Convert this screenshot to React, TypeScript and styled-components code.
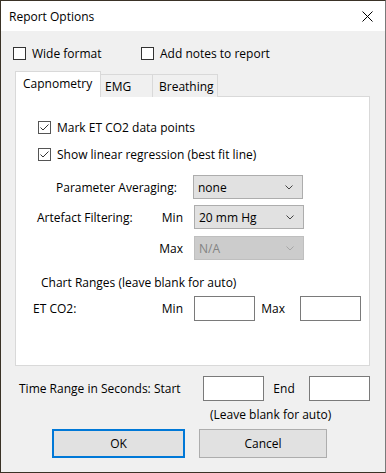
import React from 'react'
import styled, { createGlobalStyle } from 'styled-components'

const GlobalStyle = createGlobalStyle`
  html, body {
    margin: 0;
    padding: 0;
    background: #3a3226;
  }
  * {
    box-sizing: border-box;
  }
`

const Window = styled.div`
  width: 386px;
  height: 473px;
  display: flex;
  flex-direction: column;
  background: #f0f0f0;
  border: 1px solid #3a3226;
  border-right-color: #7a7a7a;
  font-family: 'Open Sans', 'Noto Sans', sans-serif;
  font-size: 12px;
  color: #000;
`

const TitleBar = styled.div`
  height: 30px;
  flex: none;
  display: flex;
  align-items: center;
  justify-content: space-between;
  background: #fff;
  padding: 0 8px 0 8px;
`

const CloseButton = styled.svg`
  width: 11px;
  height: 11px;
  margin-right: 4px;
`

const Body = styled.div`
  flex: 1;
  display: flex;
  flex-direction: column;
  padding-top: 12px;
`

const Row = styled.div<{ $top?: number; $left?: number; $height?: number }>`
  display: flex;
  align-items: center;
  height: ${(p) => p.$height ?? 20}px;
  margin-top: ${(p) => p.$top ?? 0}px;
  padding-left: ${(p) => p.$left ?? 0}px;
  white-space: nowrap;
`

const CheckItem = styled.label<{ $width?: number }>`
  display: flex;
  align-items: center;
  gap: 6px;
  width: ${(p) => (p.$width ? `${p.$width}px` : 'auto')};
`

const Box = styled.span<{ $soft?: boolean }>`
  width: 13px;
  height: 13px;
  flex: none;
  display: flex;
  align-items: center;
  justify-content: center;
  background: #fff;
  border: 1px solid ${(p) => (p.$soft ? '#555' : '#333')};
`

const TabStrip = styled.div`
  display: flex;
  align-items: flex-end;
  height: 26px;
  margin: 8px 0 0 14px;
  position: relative;
  z-index: 1;
`

const Tab = styled.div<{ $active?: boolean; $width: number; $pad: number }>`
  width: ${(p) => p.$width}px;
  height: ${(p) => (p.$active ? 26 : 23)}px;
  padding: 0 0 0 ${(p) => p.$pad}px;
  display: flex;
  align-items: center;
  background: ${(p) => (p.$active ? '#fff' : '#f0f0f0')};
  border: 1px solid #d9d9d9;
  border-bottom: none;
  margin-left: ${(p) => (p.$active ? 0 : -1)}px;
  padding-bottom: ${(p) => (p.$active ? 2 : 0)}px;
`

const Panel = styled.div`
  height: 270px;
  width: 355px;
  margin: -1px 0 0 14px;
  padding-top: 20px;
  background: #fff;
  border: 1px solid #d9d9d9;
  display: flex;
  flex-direction: column;
`

const Label = styled.span<{ $width?: number; $right?: boolean }>`
  display: inline-block;
  width: ${(p) => (p.$width ? `${p.$width}px` : 'auto')};
  text-align: ${(p) => (p.$right ? 'right' : 'left')};
  padding-right: ${(p) => (p.$right ? 11 : 0)}px;
  flex: none;
`

const Combo = styled.div<{ $disabled?: boolean }>`
  width: 110px;
  height: 24px;
  flex: none;
  display: flex;
  align-items: center;
  justify-content: space-between;
  padding: 0 9px 0 4px;
  background: ${(p) => (p.$disabled ? '#cccccc' : '#e1e1e1')};
  border: 1px solid ${(p) => (p.$disabled ? '#bfbfbf' : '#adadad')};
  color: ${(p) => (p.$disabled ? '#838383' : '#000')};
`

const Chevron = styled.svg<{ $disabled?: boolean }>`
  width: 8px;
  height: 5px;
  stroke: ${(p) => (p.$disabled ? '#a6a6a6' : '#444')};
`

const TextBox = styled.div`
  width: 61px;
  height: 25px;
  flex: none;
  background: #fff;
  border: 1px solid #7a7a7a;
`

const Button = styled.div<{ $default?: boolean; $width: number }>`
  width: ${(p) => p.$width}px;
  height: 29px;
  display: flex;
  align-items: center;
  justify-content: center;
  background: #e1e1e1;
  border: ${(p) => (p.$default ? '2px solid #0078d7' : '1px solid #adadad')};
`

const ButtonRow = styled(Row)`
  gap: 14px;
`

const Check = ({ checked, soft }: { checked?: boolean; soft?: boolean }) => (
  <Box $soft={soft}>
    {checked && (
      <svg width="11" height="11" viewBox="0 0 11 11">
        <polyline points="1.5,5.5 4,8 9.5,2.5" fill="none" stroke="#333" strokeWidth="1" />
      </svg>
    )}
  </Box>
)

const Select = ({ value, disabled }: { value: string; disabled?: boolean }) => (
  <Combo $disabled={disabled}>
    <span>{value}</span>
    <Chevron $disabled={disabled} viewBox="0 0 8 5">
      <polyline points="0.5,0.5 4,4 7.5,0.5" fill="none" strokeWidth="1" />
    </Chevron>
  </Combo>
)

export default function App() {
  return (
    <Window>
      <GlobalStyle />
      <TitleBar>
        <span>Report Options</span>
        <CloseButton viewBox="0 0 11 11">
          <path d="M0.5 0.5 L10.5 10.5 M10.5 0.5 L0.5 10.5" stroke="#000" strokeWidth="1" />
        </CloseButton>
      </TitleBar>
      <Body>
        <Row $left={12}>
          <CheckItem $width={128}>
            <Check />
            Wide format
          </CheckItem>
          <CheckItem>
            <Check />
            Add notes to report
          </CheckItem>
        </Row>

        <TabStrip>
          <Tab $active $width={86} $pad={7}>Capnometry</Tab>
          <Tab $width={53} $pad={4}>EMG</Tab>
          <Tab $width={66} $pad={6}>Breathing</Tab>
        </TabStrip>

        <Panel>
          <Row $left={22}>
            <CheckItem>
              <Check checked soft />
              Mark ET CO2 data points
            </CheckItem>
          </Row>
          <Row $left={22} $top={7}>
            <CheckItem>
              <Check checked soft />
              Show linear regression (best fit line)
            </CheckItem>
          </Row>
          <Row $left={40} $top={11} $height={24}>
            <Label $width={137}>Parameter Averaging:</Label>
            <Select value="none" />
          </Row>
          <Row $left={21} $top={6} $height={24}>
            <Label $width={112}>Artefact Filtering:</Label>
            <Label $width={45} $right>Min</Label>
            <Select value="20 mm Hg" />
          </Row>
          <Row $left={21} $top={7} $height={24}>
            <Label $width={112} />
            <Label $width={45} $right>Max</Label>
            <Select value="N/A" disabled />
          </Row>
          <Row $left={25} $top={12}>
            <Label>Chart Ranges (leave blank for auto)</Label>
          </Row>
          <Row $left={17} $top={4} $height={25}>
            <Label $width={116}>ET CO2:</Label>
            <Label $width={45} $right>Min</Label>
            <TextBox />
            <Label $width={45}>&nbsp;&nbsp;Max</Label>
            <TextBox />
          </Row>
        </Panel>

        <Row $left={18} $top={10} $height={25}>
          <Label $width={184}>Time Range in Seconds: Start</Label>
          <TextBox />
          <Label $width={45}>&nbsp;&nbsp;&nbsp;End</Label>
          <TextBox />
        </Row>
        <Row $left={209} $top={4} $height={18}>
          <Label>(Leave blank for auto)</Label>
        </Row>
        <ButtonRow $left={51} $top={6} $height={29}>
          <Button $default $width={133}>OK</Button>
          <Button $width={128}>Cancel</Button>
        </ButtonRow>
      </Body>
    </Window>
  )
}
